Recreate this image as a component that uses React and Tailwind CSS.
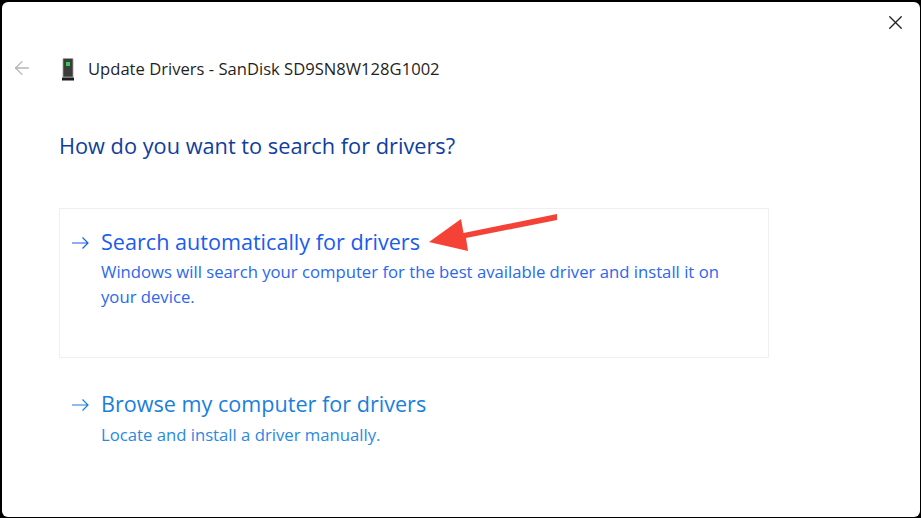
import { ArrowLeft, X } from 'lucide-react';

const font = { fontFamily: '"Open Sans", "Noto Sans", sans-serif' };

function DriverIcon() {
  return (
    <svg width="12" height="23" viewBox="0 0 12 23" className="shrink-0">
      <path d="M1.5 0.5h9l.5.5V19H1V1z" fill="#3c3c3c" stroke="#a0a0a0" strokeWidth="0.8" />
      <rect x="4" y="4" width="4" height="4" fill="#2fd04a" />
      <rect x="0" y="19.5" width="12" height="3" fill="#1c1c1c" />
    </svg>
  );
}

function LinkArrow({ className }) {
  return (
    <svg width="17" height="14" viewBox="0 0 17 14" fill="none" stroke="currentColor" strokeWidth="1.2" className={className}>
      <path d="M0 7h16M10.5 1.5L16 7l-5.5 5.5" />
    </svg>
  );
}

function Option({ title, desc, titleColor, descColor, descGap, className }) {
  return (
    <div className={`flex w-[710px] items-start gap-[12px] border pl-[12px] ${className}`}>
      <LinkArrow className={`mt-[9px] shrink-0 ${titleColor}`} />
      <div>
        <div className={`text-[21.6px] leading-[30px] ${titleColor}`}>{title}</div>
        <div className={`w-[640px] text-[16.7px] leading-[25px] ${descGap} ${descColor}`}>{desc}</div>
      </div>
    </div>
  );
}

export default function App() {
  return (
    <div style={font} className="h-[518px] w-[921px] overflow-hidden bg-black pb-px pl-[2px] pr-px pt-[2px]">
      <div className="relative h-full rounded-[6px] bg-white">
        <div className="flex items-center justify-end pr-[13px] pt-[9px]">
          <X size={23} strokeWidth={1.4} className="text-[#222]" />
        </div>
        <div className="mt-[23px] flex items-center pl-[9px]">
          <ArrowLeft size={22} strokeWidth={1.4} className="mb-[2px] text-[#b5b5b5]" />
          <div className="ml-[29px] flex"><DriverIcon /></div>
          <span className="ml-[14px] text-[16.6px] leading-[24px] text-[#1f1f1f]">Update Drivers - SanDisk SD9SN8W128G1002</span>
        </div>
        <div className="ml-[57px] mt-[48px] text-[21.75px] leading-[34px] text-[#0f3e9e]">How do you want to search for drivers?</div>
        <div className="ml-[57px] mt-[45px]">
          <Option
            title="Search automatically for drivers"
            desc="Windows will search your computer for the best available driver and install it on your device."
            titleColor="text-[#1a5cec]"
            descColor="text-[#2a68ee]"
            descGap="mt-[2px]"
            className="h-[150px] border-[#efefef] pt-[18px]"
          />
          <Option
            title="Browse my computer for drivers"
            desc="Locate and install a driver manually."
            titleColor="text-[#1a7fdc]"
            descColor="text-[#2a8ae2]"
            descGap="mt-[3px]"
            className="h-[100px] border-transparent pt-[30px]"
          />
        </div>
        {/* annotation arrow */}
        <svg className="absolute left-[-2px] top-[-2px]" width="921" height="518" viewBox="0 0 921 518">
          <path d="M429 242 L461 219 L463.5 233 L557 214 L557 220 L466 238 L468 251 Z" fill="#f44336" />
        </svg>
      </div>
    </div>
  );
}
